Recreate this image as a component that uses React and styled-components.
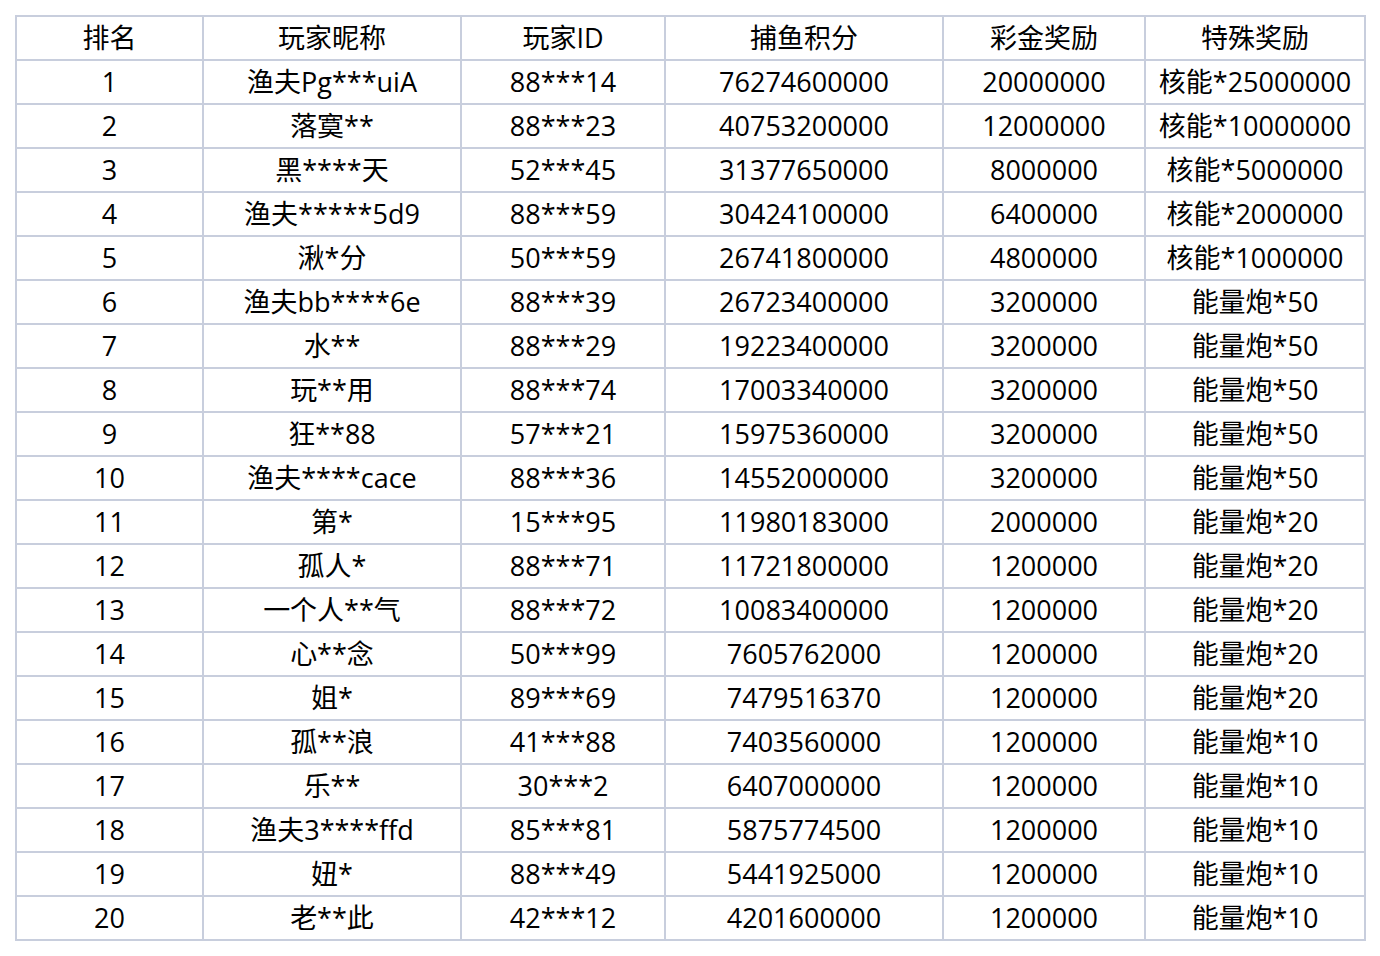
import React from 'react'
import styled, { createGlobalStyle } from 'styled-components'

const GlobalStyle = createGlobalStyle`
  html, body {
    margin: 0;
    padding: 0;
    background: #ffffff;
  }
`

const columns = [
  { title: '排名', width: 187 },
  { title: '玩家昵称', width: 258 },
  { title: '玩家ID', width: 204 },
  { title: '捕鱼积分', width: 278 },
  { title: '彩金奖励', width: 202 },
  { title: '特殊奖励', width: 220 }
]

const rows = [
  ['1', '渔夫Pg***uiA', '88***14', '76274600000', '20000000', '核能*25000000'],
  ['2', '落寞**', '88***23', '40753200000', '12000000', '核能*10000000'],
  ['3', '黑****天', '52***45', '31377650000', '8000000', '核能*5000000'],
  ['4', '渔夫*****5d9', '88***59', '30424100000', '6400000', '核能*2000000'],
  ['5', '湫*分', '50***59', '26741800000', '4800000', '核能*1000000'],
  ['6', '渔夫bb****6e', '88***39', '26723400000', '3200000', '能量炮*50'],
  ['7', '水**', '88***29', '19223400000', '3200000', '能量炮*50'],
  ['8', '玩**用', '88***74', '17003340000', '3200000', '能量炮*50'],
  ['9', '狂**88', '57***21', '15975360000', '3200000', '能量炮*50'],
  ['10', '渔夫****cace', '88***36', '14552000000', '3200000', '能量炮*50'],
  ['11', '第*', '15***95', '11980183000', '2000000', '能量炮*20'],
  ['12', '孤人*', '88***71', '11721800000', '1200000', '能量炮*20'],
  ['13', '一个人**气', '88***72', '10083400000', '1200000', '能量炮*20'],
  ['14', '心**念', '50***99', '7605762000', '1200000', '能量炮*20'],
  ['15', '姐*', '89***69', '7479516370', '1200000', '能量炮*20'],
  ['16', '孤**浪', '41***88', '7403560000', '1200000', '能量炮*10'],
  ['17', '乐**', '30***2', '6407000000', '1200000', '能量炮*10'],
  ['18', '渔夫3****ffd', '85***81', '5875774500', '1200000', '能量炮*10'],
  ['19', '妞*', '88***49', '5441925000', '1200000', '能量炮*10'],
  ['20', '老**此', '42***12', '4201600000', '1200000', '能量炮*10']
]

const Page = styled.div`
  padding: 15px;
`

const Table = styled.table`
  border-collapse: collapse;
  table-layout: fixed;
  width: 1350px;
  font-family: "Open Sans", "Noto Sans CJK SC", sans-serif;
  font-size: 27px;
  color: #000;
`

const Cell = styled.td`
  height: 42px;
  padding: 0;
  border: 2px solid #c8cedd;
  text-align: center;
  vertical-align: middle;
  font-weight: 400;
  line-height: 42px;
  white-space: nowrap;
  overflow: hidden;
`

const HeadCell = styled(Cell).attrs({ as: 'th' })`
  font-weight: 400;
`

export default function App() {
  return (
    <Page>
      <GlobalStyle />
      <Table>
        <colgroup>
          {columns.map(c => (
            <col key={c.title} style={{ width: c.width }} />
          ))}
        </colgroup>
        <thead>
          <tr>
            {columns.map(c => (
              <HeadCell key={c.title}>{c.title}</HeadCell>
            ))}
          </tr>
        </thead>
        <tbody>
          {rows.map(r => (
            <tr key={r[0]}>
              {r.map((v, i) => (
                <Cell key={i}>{v}</Cell>
              ))}
            </tr>
          ))}
        </tbody>
      </Table>
    </Page>
  )
}
